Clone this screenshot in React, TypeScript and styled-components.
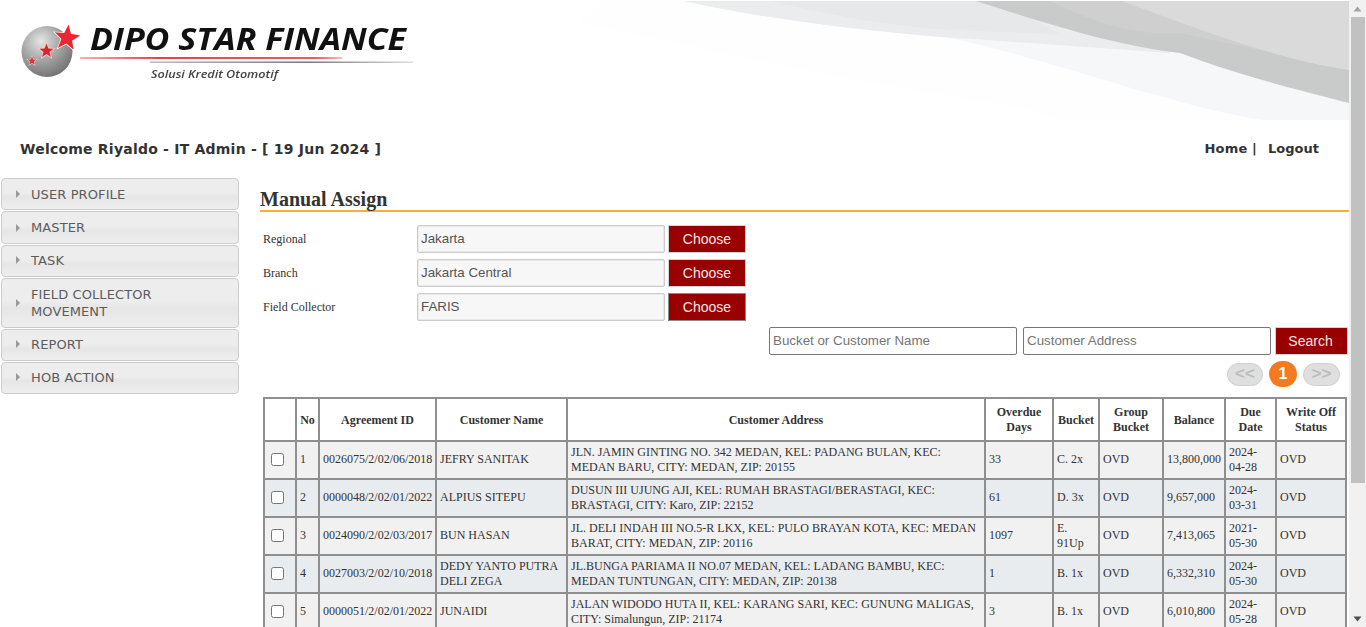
import React from "react";
import styled, { createGlobalStyle } from "styled-components";

const Global = createGlobalStyle`
  html, body { margin: 0; padding: 0; height: 100%; overflow: hidden; background: #fff; }
  * { box-sizing: border-box; }
`;

const Page = styled.div`
  display: flex;
  height: 627px;
  overflow: hidden;
  background: #fff;
`;
const Main = styled.div`
  flex: 1;
  min-width: 0;
  display: flex;
  flex-direction: column;
`;
const Header = styled.header`
  height: 120px;
  display: flex;
  justify-content: space-between;
  flex: none;
`;
const LogoSvg = styled.svg`
  filter: blur(0.35px);
`;
const TopBar = styled.div`
  height: 58px;
  flex: none;
  display: flex;
  justify-content: space-between;
  padding: 20px 30px 0 20px;
  font: bold 14px/18px "DejaVu Sans", sans-serif;
  color: #333;
`;
const Welcome = styled.div`
  letter-spacing: 0.22px;
`;
const TopLinks = styled.nav`
  display: flex;
  font-size: 13px;
  gap: 11px;
`;
const HomeLink = styled.span`
  letter-spacing: 0.2px;
`;
const Body = styled.div`
  flex: 1;
  min-height: 0;
  display: flex;
  align-items: flex-start;
  padding-left: 1px;
`;
const Sidebar = styled.aside`
  width: 238px;
  flex: none;
  display: flex;
  flex-direction: column;
  gap: 1px;
`;
const MenuItem = styled.div<{ $h: number; $up: boolean }>`
  height: ${(p) => p.$h}px;
  display: flex;
  align-items: center;
  padding: 0 30px ${(p) => (p.$up ? 2 : 0)}px 14px;
  gap: 11px;
  border: 1px solid #ccc;
  border-radius: 4px;
  background: linear-gradient(#ededed 0%, #ededed 45%, #e6e6e6 60%, #eeeeee 100%);
  font: 13px/17px "DejaVu Sans", sans-serif;
  color: #5c5c5c;
  letter-spacing: 0.1px;
`;
const Caret = styled.span`
  width: 0;
  height: 0;
  flex: none;
  border-left: 4px solid #999;
  border-top: 4px solid transparent;
  border-bottom: 4px solid transparent;
`;
const Content = styled.main`
  flex: 1;
  min-width: 0;
  margin-left: 21px;
  padding-top: 9px;
`;
const Title = styled.h2`
  margin: 0;
  height: 25px;
  font: bold 20px/25px "Liberation Serif", serif;
  color: #333;
  border-bottom: 2px solid #f9ad3c;
`;
const Form = styled.div`
  margin-top: 13px;
  display: flex;
  flex-direction: column;
  gap: 6px;
`;
const FormRow = styled.div`
  display: flex;
  align-items: center;
  height: 28px;
`;
const Label = styled.label`
  width: 157px;
  padding-left: 3px;
  font: 12px "Liberation Serif", serif;
  color: #333;
`;
const ReadInput = styled.input`
  width: 248px;
  height: 28px;
  padding: 0 3px 2px;
  background: #f7f7f7;
  border: 1px solid #ccc;
  box-shadow: inset 0 0 0 0.5px #ddd;
  border-radius: 2px;
  font: 13.33px "Liberation Sans", sans-serif;
  color: #555;
  outline: none;
`;
const RedButton = styled.button<{ $dark?: boolean; $w: number; $pr?: number }>`
  width: ${(p) => p.$w}px;
  height: 28px;
  padding: 0 ${(p) => p.$pr ?? 0}px 0 0;
  border: 1px solid ${(p) => (p.$dark ? "#8a8a8a" : "#d3d3d3")};
  background: #990000;
  color: #f3e6e6;
  font: 14px "Liberation Sans", sans-serif;
`;
const ChooseButton = styled(RedButton)`
  margin-left: 3px;
`;
const SearchRow = styled.div`
  display: flex;
  justify-content: flex-end;
  align-items: center;
  margin-top: 6px;
  padding-right: 1px;
`;
const SearchInput = styled.input`
  width: 248px;
  height: 28px;
  margin-right: 6px;
  padding: 0 3px 2px;
  background: #fff;
  border: 1px solid #767676;
  border-radius: 2px;
  font: 13.33px "Liberation Sans", sans-serif;
  color: #333;
  outline: none;
  &::placeholder { color: #757575; opacity: 1; }
  &:nth-of-type(2) { margin-right: 4px; }
`;
const Pager = styled.div`
  display: flex;
  justify-content: flex-end;
  align-items: center;
  gap: 6px;
  height: 26px;
  margin-top: 6px;
  padding-right: 9px;
`;
const PageNav = styled.span<{ $w: number }>`
  width: ${(p) => p.$w}px;
  height: 23px;
  border-radius: 12px;
  border: 1px solid #cfcfcf;
  background: #dfdfdf;
  color: #bdbdbd;
  font: bold 17px/20px "Liberation Sans", sans-serif;
  text-align: center;
`;
const PageCurrent = styled.span`
  width: 28px;
  height: 26px;
  border-radius: 14px;
  background: #f47a20;
  color: #fff;
  font: bold 16px/26px "Liberation Sans", sans-serif;
  text-align: center;
`;
const Table = styled.table`
  margin: 10px 0 0 3px;
  width: 1082px;
  table-layout: fixed;
  border-collapse: collapse;
  font: 12px/15px "Liberation Serif", serif;
  color: #333;
  border: 2px solid #8f8f8f;
`;
const Th = styled.th`
  height: 43px;
  padding: 3px 2px 2px;
  border: 2px solid #8f8f8f;
  background: #fff;
  font-weight: bold;
  text-align: center;
  vertical-align: middle;
`;
const Tr = styled.tr<{ $alt: boolean }>`
  background: ${(p) => (p.$alt ? "#e9ecef" : "#f1f1f1")};
`;
const Td = styled.td`
  height: 38px;
  padding: 0 3px 1px;
  border: 2px solid #8f8f8f;
  vertical-align: middle;
  overflow: hidden;
`;
const Check = styled.input`
  display: block;
  margin: 0 0 0 3px;
  width: 13px;
  height: 13px;
`;
const ScrollTrack = styled.div`
  width: 17px;
  flex: none;
  background: #f1f1f1;
  display: flex;
  flex-direction: column;
  align-items: center;
`;
const ScrollArrow = styled.div`
  height: 17px;
  flex: none;
  display: flex;
  align-items: center;
  justify-content: center;
`;
const ScrollThumb = styled.div`
  width: 14px;
  height: 466px;
  flex: none;
  background: #c1c1c1;
`;
const ScrollGap = styled.div`
  flex: 1;
`;

const star = (cx: number, cy: number, r: number, rot = 0) => {
  const pts: string[] = [];
  for (let i = 0; i < 10; i++) {
    const rad = i % 2 === 0 ? r : r * 0.42;
    const a = -Math.PI / 2 + (i * Math.PI) / 5 + rot;
    pts.push(`${(cx + rad * Math.cos(a)).toFixed(1)},${(cy + rad * Math.sin(a)).toFixed(1)}`);
  }
  return pts.join(" ");
};

const Logo = () => (
  <LogoSvg width="420" height="120" viewBox="0 0 420 120">
    <defs>
      <radialGradient id="globe" cx="0.38" cy="0.3" r="0.75">
        <stop offset="0" stopColor="#e6e6e6" />
        <stop offset="0.5" stopColor="#a5a5a5" />
        <stop offset="1" stopColor="#6f6f6f" />
      </radialGradient>
      <linearGradient id="redline" x1="0" x2="1" y1="0" y2="0">
        <stop offset="0" stopColor="#f7b0b0" />
        <stop offset="0.3" stopColor="#e8404a" />
        <stop offset="0.9" stopColor="#ee5a60" />
        <stop offset="1" stopColor="#f8c0c0" />
      </linearGradient>
      <linearGradient id="greyline" x1="0" x2="1" y1="0" y2="0">
        <stop offset="0" stopColor="#bbb" />
        <stop offset="0.6" stopColor="#777" />
        <stop offset="1" stopColor="#ddd" />
      </linearGradient>
    </defs>
    <circle cx="47" cy="51.5" r="25.5" fill="url(#globe)" />
    <polygon points={star(67, 38, 15.5, 0.12)} fill="#fff" />
    <polygon points={star(67, 38, 13.5, 0.12)} fill="#ee2430" />
    <polygon points={star(46.5, 51, 9.5, 0)} fill="#f3d0d0" />
    <polygon points={star(46.5, 51, 7.5, 0)} fill="#d9262e" />
    <polygon points={star(32, 61, 6, 0)} fill="#f3d0d0" />
    <polygon points={star(32, 61, 4.7, 0)} fill="#d9363c" />
    <text x="90" y="50" textLength="316" lengthAdjust="spacingAndGlyphs" fontFamily="'Open Sans', sans-serif" fontStyle="italic" fontWeight="700" fontSize="30" fill="#111">DIPO STAR FINANCE</text>
    <rect x="80" y="57" width="262" height="2" fill="url(#redline)" />
    <rect x="150" y="61.5" width="263" height="1.5" fill="url(#greyline)" />
    <text x="151" y="78" textLength="127" lengthAdjust="spacingAndGlyphs" fontFamily="'Open Sans', sans-serif" fontStyle="italic" fontWeight="600" fontSize="11" fill="#444">Solusi Kredit Otomotif</text>
  </LogoSvg>
);

const Swoosh = () => (
  <svg width="769" height="120" viewBox="580 0 769 120">
    <path d="M580 22 C 760 62 900 90 1022 107 L1060 120 L1349 120 L1349 1 L600 1 Z" fill="#fefefe" />
    <path d="M684 1 C 770 20 860 30 946 37 C 1060 62 1170 105 1262 120 L1349 120 L1349 1 Z" fill="#f6f7f9" />
    <path d="M684 1 C 770 20 860 30 940 37 C 1020 42 1100 48 1168 53 L1220 40 L1100 1 Z" fill="#ebecee" />
    <path d="M770 1 C 830 15 880 25 950 30 L1060 34 L1000 1 Z" fill="#e7e8ea" />
    <path d="M976 1 C 1060 28 1120 46 1180 53 C 1240 76 1300 90 1349 103 L1349 1 Z" fill="#c9caca" />
    <path d="M1050 1 C 1090 20 1130 36 1180 33 C 1240 46 1300 58 1349 70 L1349 1 Z" fill="#cfcfd0" />
    <path d="M1122 1 C 1200 30 1280 60 1349 70 L1349 1 Z" fill="#dadadb" />
  </svg>
);

const rows = [
  ["1", "0026075/2/02/06/2018", "JEFRY SANITAK", "JLN. JAMIN GINTING NO. 342 MEDAN, KEL: PADANG BULAN, KEC: MEDAN BARU, CITY: MEDAN, ZIP: 20155", "33", "C. 2x", "OVD", "13,800,000", "2024-04-28", "OVD"],
  ["2", "0000048/2/02/01/2022", "ALPIUS SITEPU", "DUSUN III UJUNG AJI, KEL: RUMAH BRASTAGI/BERASTAGI, KEC: BRASTAGI, CITY: Karo, ZIP: 22152", "61", "D. 3x", "OVD", "9,657,000", "2024-03-31", "OVD"],
  ["3", "0024090/2/02/03/2017", "BUN HASAN", "JL. DELI INDAH III NO.5-R LKX, KEL: PULO BRAYAN KOTA, KEC: MEDAN BARAT, CITY: MEDAN, ZIP: 20116", "1097", "E. 91Up", "OVD", "7,413,065", "2021-05-30", "OVD"],
  ["4", "0027003/2/02/10/2018", "DEDY YANTO PUTRA DELI ZEGA", "JL.BUNGA PARIAMA II NO.07 MEDAN, KEL: LADANG BAMBU, KEC: MEDAN TUNTUNGAN, CITY: MEDAN, ZIP: 20138", "1", "B. 1x", "OVD", "6,332,310", "2024-05-30", "OVD"],
  ["5", "0000051/2/02/01/2022", "JUNAIDI", "JALAN WIDODO HUTA II, KEL: KARANG SARI, KEC: GUNUNG MALIGAS, CITY: Simalungun, ZIP: 21174", "3", "B. 1x", "OVD", "6,010,800", "2024-05-28", "OVD"],
];
const cols = [32, 23, 117, 131, 418, 68, 46, 64, 62, 51, 70];
const heads = ["", "No", "Agreement ID", "Customer Name", "Customer Address", "Overdue Days", "Bucket", "Group Bucket", "Balance", "Due Date", "Write Off Status"];
const menu: [string, number, boolean][] = [
  ["USER PROFILE", 32, false],
  ["MASTER", 33, false],
  ["TASK", 32, true],
  ["FIELD COLLECTOR MOVEMENT", 50, false],
  ["REPORT", 32, true],
  ["HOB ACTION", 32, true],
];
const fields = [["Regional", "Jakarta"], ["Branch", "Jakarta Central"], ["Field Collector", "FARIS"]];

export default function App() {
  return (
    <Page>
      <Global />
      <Main>
        <Header>
          <Logo />
          <Swoosh />
        </Header>
        <TopBar>
          <Welcome>Welcome Riyaldo - IT Admin - [ 19 Jun 2024 ]</Welcome>
          <TopLinks>
            <HomeLink>Home |</HomeLink>
            <span>Logout</span>
          </TopLinks>
        </TopBar>
        <Body>
          <Sidebar>
            {menu.map(([m, h, up]) => (
              <MenuItem key={m} $h={h} $up={up}>
                <Caret />
                <span>{m}</span>
              </MenuItem>
            ))}
          </Sidebar>
          <Content>
            <Title>Manual Assign</Title>
            <Form>
              {fields.map(([l, v], i) => (
                <FormRow key={l}>
                  <Label>{l}</Label>
                  <ReadInput readOnly value={v} />
                  <ChooseButton $w={78} $dark={i === 2}>Choose</ChooseButton>
                </FormRow>
              ))}
            </Form>
            <SearchRow>
              <SearchInput placeholder="Bucket or Customer Name" />
              <SearchInput placeholder="Customer Address" />
              <RedButton $w={73} $pr={2}>Search</RedButton>
            </SearchRow>
            <Pager>
              <PageNav $w={36}>&lt;&lt;</PageNav>
              <PageCurrent>1</PageCurrent>
              <PageNav $w={37}>&gt;&gt;</PageNav>
            </Pager>
            <Table>
              <colgroup>
                {cols.map((w, i) => (
                  <col key={i} width={w} />
                ))}
              </colgroup>
              <thead>
                <tr>
                  {heads.map((h, i) => (
                    <Th key={i}>{h}</Th>
                  ))}
                </tr>
              </thead>
              <tbody>
                {rows.map((r, i) => (
                  <Tr key={i} $alt={i % 2 === 1}>
                    <Td>
                      <Check type="checkbox" />
                    </Td>
                    {r.map((c, j) => (
                      <Td key={j}>{c}</Td>
                    ))}
                  </Tr>
                ))}
              </tbody>
            </Table>
          </Content>
        </Body>
      </Main>
      <ScrollTrack>
        <ScrollArrow>
          <svg width="9" height="6" viewBox="0 0 9 6"><path d="M4.5 0.5 L8.5 5.5 L0.5 5.5 Z" fill="#a3a3a3" /></svg>
        </ScrollArrow>
        <ScrollThumb />
        <ScrollGap />
        <ScrollArrow>
          <svg width="9" height="6" viewBox="0 0 9 6"><path d="M0.5 0.5 L8.5 0.5 L4.5 5.5 Z" fill="#505050" /></svg>
        </ScrollArrow>
      </ScrollTrack>
    </Page>
  );
}
